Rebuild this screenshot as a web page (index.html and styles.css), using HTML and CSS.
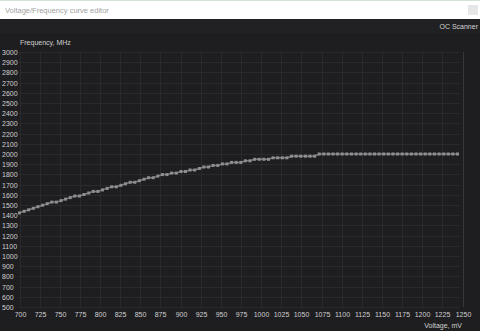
FILE: index.html
```html
<!DOCTYPE html>
<html lang="en">
<head>
    <meta charset="UTF-8">
    <meta name="viewport" content="width=device-width, initial-scale=1.0">
    <title>Voltage/Frequency curve editor</title>
    <link rel="stylesheet" href="styles.css">
</head>
<body>
    <div class="window">
        <div class="titlebar">
            <span class="title">Voltage/Frequency curve editor</span>
            <span class="close"></span>
        </div>
        <div class="toolbar">
            <span class="scanner">OC Scanner</span>
        </div>
        <div class="chart">
            <svg id="curve" width="480" height="298" viewBox="0 0 480 298"></svg>
        </div>
    </div>

    <script>
        // Escala del grafico (coordenadas dentro del svg)
        const svg = document.getElementById('curve');
        const NS = 'http://www.w3.org/2000/svg';
        const plotLeft = 19.5, plotRight = 459;
        const plotTop = 19, stepY = 10.2;   // 100 MHz
        const stepX = 20.14;                // 25 mV

        function add(tag, attrs, text) {
            const el = document.createElementNS(NS, tag);
            for (const k in attrs) el.setAttribute(k, attrs[k]);
            if (text !== undefined) el.textContent = text;
            svg.appendChild(el);
            return el;
        }

        function yOf(freq) { return plotTop + (3000 - freq) / 100 * stepY; }
        function xOf(mv) { return plotLeft + (mv - 700) / 25 * stepX; }

        const plotBottom = yOf(500);

        // rejilla horizontal + etiquetas de frecuencia
        for (let f = 3000; f >= 500; f -= 100) {
            const y = Math.round(yOf(f)) + 0.5;
            add('line', { x1: plotLeft, x2: plotRight, y1: y, y2: y, class: 'grid' });
            add('text', { x: 2, y: y + 2.5, class: 'label' }, f);
        }

        // rejilla vertical + etiquetas de voltaje
        for (let v = 700; v <= 1250; v += 25) {
            const x = Math.round(xOf(v)) + 0.5;
            add('line', { x1: x, x2: x, y1: plotTop, y2: plotBottom, class: v == 1250 ? 'grid edge' : 'grid' });
            add('text', { x: x, y: 284, class: 'label', 'text-anchor': 'middle' }, v);
        }

        add('text', { x: 20, y: 12, class: 'axis' }, 'Frequency, MHz');
        add('text', { x: 462, y: 295, class: 'axis', 'text-anchor': 'end' }, 'Voltage, mV');

        // puntos medidos de la curva (x en px, frecuencia)
        const shape = [
            [19.5, 1430], [53, 1529], [100, 1647], [133, 1725], [160, 1790],
            [180, 1822], [220, 1900], [260, 1950], [300, 1980], [316, 1988],
            [317, 2000], [459, 2000]
        ];

        function freqAt(x) {
            for (let i = 1; i < shape.length; i++) {
                if (x <= shape[i][0]) {
                    const a = shape[i - 1], b = shape[i];
                    const t = (x - a[0]) / (b[0] - a[0]);
                    return a[1] + (b[1] - a[1]) * t;
                }
            }
            return 2000;
        }

        const count = 96;
        const pts = [];
        for (let i = 0; i < count; i++) {
            const x = plotLeft + (457.5 - plotLeft) * i / (count - 1);
            let f = freqAt(x);
            if (f < 2000) f = Math.round(f / 15) * 15 - 2;
            pts.push([x, yOf(f)]);
        }

        add('polyline', {
            points: pts.map(p => p[0].toFixed(1) + ',' + p[1].toFixed(1)).join(' ') + ' 459,' + yOf(2000),
            class: 'line'
        });

        pts.forEach(p => {
            add('rect', { x: (p[0] - 1.5).toFixed(1), y: (p[1] - 1.5).toFixed(1), width: 3, height: 3, class: 'dot' });
        });
    </script>
</body>
</html>
```

FILE: styles.css
```css
/* Editor de curva, tema oscuro */
body {
    margin: 0;
    background-color: #1e1e21;
    font-family: "Liberation Sans", Arial, sans-serif;
    overflow: hidden;
}

.window {
    display: flex;
    flex-direction: column;
    width: 480px;
    height: 331px;
}

.titlebar {
    display: flex;
    align-items: center;
    justify-content: space-between;
    height: 18px;
    background-color: #ffffff;
    border-top: 1px solid #d3e3d6;
    padding: 0 2px 0 5px;
}

.title {
    color: #a2a2a2;
    font-size: 7.5px;
}

.close {
    width: 10px;
    height: 10px;
    background-color: #e6e6e6;
}

.toolbar {
    display: flex;
    justify-content: flex-end;
    align-items: center;
    height: 14px;
    background-color: #212124;
    padding-right: 2px;
}

.scanner {
    color: #d2d2d2;
    font-size: 7px;
}

.chart {
    flex-grow: 1;
}

.chart svg {
    display: block;
}

.grid {
    stroke: #2a2a2e;
    stroke-width: 1;
}

.edge {
    stroke: #38383c;
}

.label {
    fill: #cfcfcf;
    font-size: 7px;
}

.axis {
    fill: #cfcfcf;
    font-size: 7px;
}

.line {
    fill: none;
    stroke: #7a7a7a;
    stroke-width: 1.5;
}

.dot {
    fill: #8e8e8e;
}
```
